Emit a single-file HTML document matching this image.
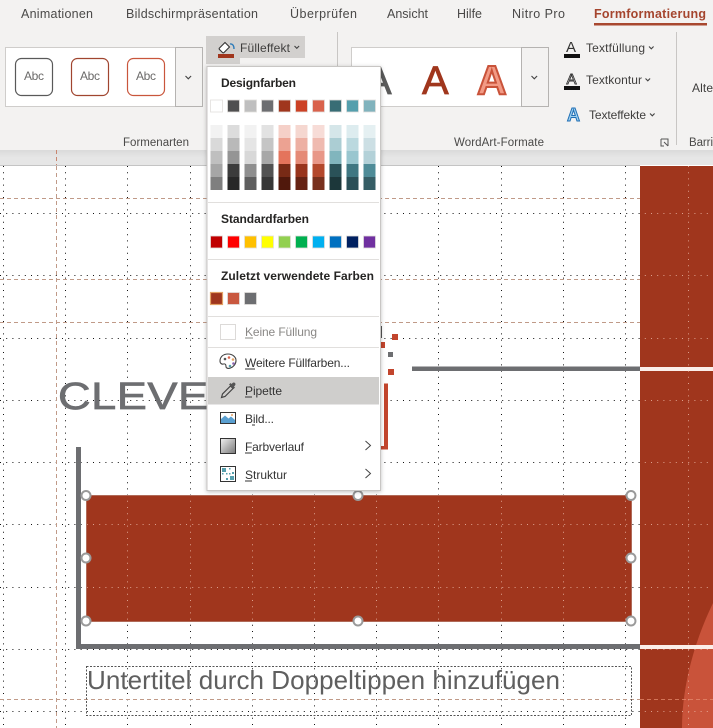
<!DOCTYPE html>
<html lang="de">
<head>
<meta charset="utf-8">
<title>Formformatierung</title>
<style>
html,body{margin:0;padding:0;background:#fff;width:713px;height:728px;overflow:hidden}
svg{display:block;position:absolute;left:0;top:0;overflow:hidden}
text{font-family:"Liberation Sans",sans-serif;fill:#444}
.tab{font-size:12.5px;fill:#4a4948}
.grp{font-size:11.5px;fill:#4a4948}
.cmd{font-size:12px;fill:#3f3e3d}
.hd{font-size:12px;font-weight:bold;fill:#252423}
.mi{font-size:12px;fill:#333}
.abc{font-size:12px;fill:#6b6a69}
.chev{fill:none;stroke:#444;stroke-width:1.1}
.sep{stroke:#e1dfdd;stroke-width:1}
.ul{stroke:#333;stroke-width:1}
.h{fill:#fff;stroke:#9a9a9a;stroke-width:2}
</style>
</head>
<body>
<svg width="713" height="728" viewBox="0 0 713 728" xmlns="http://www.w3.org/2000/svg">
<defs>
<linearGradient id="shadow" x1="0" y1="0" x2="0" y2="1"><stop offset="0" stop-color="#dadada"/><stop offset=".5" stop-color="#e6e6e6"/><stop offset="1" stop-color="#e6e6e6"/></linearGradient>
<linearGradient id="grad" x1="0" y1="0" x2="1" y2="1"><stop offset="0" stop-color="#f2f2f2"/><stop offset="1" stop-color="#777"/></linearGradient>
<clipPath id="red"><rect x="87" y="496" width="544" height="125"/><rect x="640" y="166" width="73" height="562"/></clipPath>
<filter id="ms" x="-10%" y="-10%" width="120%" height="120%"><feDropShadow dx="0" dy="1" stdDeviation="2" flood-color="#000" flood-opacity=".25"/></filter>
<g id="vg">
<path d="M3.500 166V728M65.500 166V728M127.500 166V728M190.500 166V728M252.500 166V728M314.500 166V728M376.500 166V728M438.500 166V728M501.500 166V728M563.500 166V728M625.500 166V728M688.500 166V728" fill="none" stroke-width="1" stroke-dasharray="1 5.200"/>
<path d="M0 213.500H713M0 275.500H713M0 338.500H713M0 400.500H713M0 462.500H713M0 524.500H713M0 587.500H713M0 649.500H713M0 711.500H713" fill="none" stroke-width="1" stroke-dasharray="1 5.200"/>
</g>
</defs>

<!-- canvas -->
<rect x="0" y="166" width="713" height="562" fill="#fff"/>
<use href="#vg" stroke="#111"/>
<path d="M0 198.500H713M0 279.500H713M0 322.500H713M0 699.500H713M56.500 166V728" fill="none" stroke="#c09a88" stroke-width="1" stroke-dasharray="4 3"/>

<!-- slide shapes -->
<rect x="640" y="166" width="73" height="562" fill="#a0361d"/>
<path d="M713 603C695 640 682 685 682 728H713Z" fill="#c9533a"/>
<rect x="412" y="366.500" width="228" height="4.500" fill="#6d6e71"/>
<rect x="640" y="367" width="73" height="4" fill="#fbeee9"/>
<rect x="76" y="447" width="5" height="202" fill="#6d6e71"/>
<rect x="76" y="644" width="564" height="5" fill="#6d6e71"/>
<rect x="640" y="645" width="73" height="4" fill="#fbeee9"/>
<text transform="translate(58 409) scale(1.19 1)" style="font-size:38px;letter-spacing:.4px;fill:#6d6e71;stroke:#6d6e71;stroke-width:.7">CLEVE</text>
<rect x="380" y="326" width="2" height="12" fill="#555"/>
<rect x="380" y="342" width="5" height="6" fill="#c2452d"/>
<rect x="392" y="334" width="6" height="6" fill="#c2452d"/>
<rect x="388" y="352" width="5" height="5" fill="#6d6e71"/>
<rect x="388" y="369" width="6" height="6" fill="#c2452d"/>
<rect x="384" y="383.500" width="4" height="66" fill="#c2452d"/>
<rect x="380" y="446" width="8" height="3.500" fill="#c2452d"/>
<rect x="86.500" y="495.500" width="545" height="126" rx="3" fill="#a0361d" stroke="#b06a58" stroke-width="1"/>
<g clip-path="url(#red)" opacity=".75"><use href="#vg" stroke="#f0c4b4"/>
<path d="M640 699.500H713" stroke="#e58a6e" stroke-dasharray="4 3"/></g>
<circle class="h" cx="86" cy="495.500" r="4.500"/><circle class="h" cx="358" cy="495.500" r="4.500"/><circle class="h" cx="631" cy="495.500" r="4.500"/>
<circle class="h" cx="86" cy="558" r="4.500"/><circle class="h" cx="631" cy="558" r="4.500"/>
<circle class="h" cx="86" cy="621" r="4.500"/><circle class="h" cx="358" cy="621" r="4.500"/><circle class="h" cx="631" cy="621" r="4.500"/>
<rect x="86.500" y="666.500" width="545" height="49" fill="none" stroke="#555" stroke-width="1" stroke-dasharray="2 1.500"/>
<text x="87" y="689" textLength="473" style="font-size:26px;fill:#5f5f5f">Untertitel durch Doppeltippen hinzufügen</text>

<!-- ribbon -->
<rect x="0" y="0" width="713" height="150" fill="#f3f2f1"/>
<rect x="0" y="150" width="713" height="15" fill="url(#shadow)"/>
<rect x="0" y="165" width="640" height="1" fill="#c4c4c4"/>
<path d="M56.500 150V165" stroke="#c9866f" stroke-dasharray="4 3"/>

<text class="tab" x="21" y="18" textLength="72">Animationen</text>
<text class="tab" x="126" y="18" textLength="132">Bildschirmpräsentation</text>
<text class="tab" x="290" y="18" textLength="67">Überprüfen</text>
<text class="tab" x="387" y="18" textLength="41">Ansicht</text>
<text class="tab" x="457" y="18" textLength="25">Hilfe</text>
<text class="tab" x="512" y="18" textLength="53">Nitro Pro</text>
<text class="tab" x="594" y="18" textLength="112" style="fill:#a5452e;font-weight:bold">Formformatierung</text>
<rect x="594" y="23" width="113" height="2.500" fill="#a8482f"/>

<!-- Shape style gallery -->
<rect x="5.500" y="47.500" width="170" height="59" fill="#fff" stroke="#cfcdcb"/>
<rect x="175.500" y="47.500" width="27" height="59" fill="#f3f2f1" stroke="#b5b3b1"/>
<path class="chev" d="M185.500 76l2.800 2.800 2.800-2.800"/>
<rect x="15.500" y="58.500" width="37" height="37" rx="6" fill="#fff" stroke="#595959" stroke-width="1.200"/>
<rect x="71.500" y="58.500" width="37" height="37" rx="6" fill="#fff" stroke="#a0452f" stroke-width="1.200"/>
<rect x="127.500" y="58.500" width="37" height="37" rx="6" fill="#fff" stroke="#c9563c" stroke-width="1.200"/>
<text class="abc" x="24" y="80" textLength="20">Abc</text>
<text class="abc" x="80" y="80" textLength="20">Abc</text>
<text class="abc" x="136" y="80" textLength="20">Abc</text>
<text class="grp" x="123" y="146" textLength="66">Formenarten</text>

<!-- Fill button -->
<rect x="206" y="36" width="99" height="22" fill="#d2d0ce"/>
<rect x="206" y="58" width="34" height="6" fill="#d2d0ce"/>
<path d="M225 42.500l-5.500 5.500c-.5.500-.5 1 0 1.500l3 3c.5.500 1 .5 1.500 0l5.500-5.500z" fill="#fff" stroke="#333" stroke-width="1.100"/>
<path d="M230 44c2.500-.5 4 1.500 4 5" fill="none" stroke="#2a7ab8" stroke-width="1.400"/>
<rect x="218" y="54" width="16" height="4" fill="#a0361d"/>
<text class="cmd" x="240" y="52" textLength="50">Fülleffekt</text>
<path class="chev" d="M294.500 46l2.300 2.300 2.300-2.300"/>

<line x1="337.500" y1="32" x2="337.500" y2="145" stroke="#c8c6c4"/>

<!-- WordArt gallery -->
<rect x="351.500" y="47.500" width="170" height="59" fill="#fff" stroke="#cfcdcb"/>
<rect x="521.500" y="47.500" width="27" height="59" fill="#f3f2f1" stroke="#b5b3b1"/>
<path class="chev" d="M531.500 76l2.800 2.800 2.800-2.800"/>
<text x="365" y="94" style="font-size:40px;fill:#5a5a5a;stroke:#5a5a5a;stroke-width:.7">A</text>
<text x="422" y="94" style="font-size:40px;fill:#a0361d;stroke:#a0361d;stroke-width:.8">A</text>
<text x="477" y="94" style="font-size:41px;font-weight:bold;fill:#f29a85;stroke:#c9533a;stroke-width:2">A</text>
<text class="grp" x="454" y="146" textLength="90">WordArt-Formate</text>

<!-- Text commands -->
<text x="566" y="52" style="font-size:15px;fill:#333">A</text>
<rect x="564" y="54" width="16" height="4" fill="#111"/>
<text class="cmd" x="586" y="52" textLength="59">Textfüllung</text>
<path class="chev" d="M649 46.500l2.300 2.300 2.300-2.300"/>
<text x="566.500" y="84" style="font-size:15px;fill:#fff;stroke:#333;stroke-width:.9">A</text>
<rect x="564" y="86" width="16" height="4" fill="#111"/>
<text class="cmd" x="586" y="84" textLength="56">Textkontur</text>
<path class="chev" d="M645.500 78.500l2.300 2.300 2.300-2.300"/>
<text x="567" y="121" style="font-size:18px;font-weight:bold;fill:#9fd0f0;stroke:#1f6fb5;stroke-width:1">A</text>
<text class="cmd" x="589" y="119" textLength="57">Texteffekte</text>
<path class="chev" d="M650 113.500l2.300 2.300 2.300-2.300"/>
<path d="M661 139h7v7M664 142l4 4M661 139v7h3" fill="none" stroke="#555" stroke-width="1"/>
<line x1="676.500" y1="32" x2="676.500" y2="145" stroke="#c8c6c4"/>
<text class="cmd" x="692" y="92" textLength="21">Alte</text>
<text class="grp" x="689" y="146" textLength="24">Barri</text>

<!-- Dropdown menu -->
<rect x="207" y="66.500" width="173.500" height="424" fill="#fff" stroke="#c8c6c4" filter="url(#ms)"/>
<text class="hd" x="221" y="87" textLength="75">Designfarben</text>
<g stroke="#e1dfdd" stroke-width=".8">
<rect x="210.500" y="100" width="12" height="12" fill="#fff"/>
<rect x="227.500" y="100" width="12" height="12" fill="#4f4f50"/>
<rect x="244.500" y="100" width="12" height="12" fill="#bfbfbf"/>
<rect x="261.500" y="100" width="12" height="12" fill="#6d6e71"/>
<rect x="278.500" y="100" width="12" height="12" fill="#a0361d"/>
<rect x="295.500" y="100" width="12" height="12" fill="#cc4125"/>
<rect x="312.500" y="100" width="12" height="12" fill="#d9624c"/>
<rect x="329.500" y="100" width="12" height="12" fill="#386d75"/>
<rect x="346.500" y="100" width="12" height="12" fill="#559fad"/>
<rect x="363.500" y="100" width="12" height="12" fill="#81b3bd"/>
</g>
<g>
<g transform="translate(210.500 125)"><rect width="12" height="13" fill="#f2f2f2"/><rect y="13" width="12" height="13" fill="#d9d9d9"/><rect y="26" width="12" height="13" fill="#bfbfbf"/><rect y="39" width="12" height="13" fill="#a6a6a6"/><rect y="52" width="12" height="13" fill="#7f7f7f"/></g>
<g transform="translate(227.500 125)"><rect width="12" height="13" fill="#dcdcdc"/><rect y="13" width="12" height="13" fill="#b9b9b9"/><rect y="26" width="12" height="13" fill="#959595"/><rect y="39" width="12" height="13" fill="#3c3c3c"/><rect y="52" width="12" height="13" fill="#282828"/></g>
<g transform="translate(244.500 125)"><rect width="12" height="13" fill="#f2f2f2"/><rect y="13" width="12" height="13" fill="#e5e5e5"/><rect y="26" width="12" height="13" fill="#d8d8d8"/><rect y="39" width="12" height="13" fill="#8f8f8f"/><rect y="52" width="12" height="13" fill="#5f5f5f"/></g>
<g transform="translate(261.500 125)"><rect width="12" height="13" fill="#e2e2e2"/><rect y="13" width="12" height="13" fill="#c5c5c5"/><rect y="26" width="12" height="13" fill="#a8a8a8"/><rect y="39" width="12" height="13" fill="#525252"/><rect y="52" width="12" height="13" fill="#373737"/></g>
<g transform="translate(278.500 125)"><rect width="12" height="13" fill="#f5d0c8"/><rect y="13" width="12" height="13" fill="#eca292"/><rect y="26" width="12" height="13" fill="#e4745c"/><rect y="39" width="12" height="13" fill="#782a16"/><rect y="52" width="12" height="13" fill="#50180c"/></g>
<g transform="translate(295.500 125)"><rect width="12" height="13" fill="#f5d7d0"/><rect y="13" width="12" height="13" fill="#edb0a3"/><rect y="26" width="12" height="13" fill="#e58a76"/><rect y="39" width="12" height="13" fill="#99341c"/><rect y="52" width="12" height="13" fill="#662213"/></g>
<g transform="translate(312.500 125)"><rect width="12" height="13" fill="#f7dcd7"/><rect y="13" width="12" height="13" fill="#efbab0"/><rect y="26" width="12" height="13" fill="#e89788"/><rect y="39" width="12" height="13" fill="#b4482c"/><rect y="52" width="12" height="13" fill="#78301d"/></g>
<g transform="translate(329.500 125)"><rect width="12" height="13" fill="#d5e6e9"/><rect y="13" width="12" height="13" fill="#abcdd3"/><rect y="26" width="12" height="13" fill="#81b5bd"/><rect y="39" width="12" height="13" fill="#2a5258"/><rect y="52" width="12" height="13" fill="#1c373a"/></g>
<g transform="translate(346.500 125)"><rect width="12" height="13" fill="#ddecef"/><rect y="13" width="12" height="13" fill="#bbd9df"/><rect y="26" width="12" height="13" fill="#99c6cf"/><rect y="39" width="12" height="13" fill="#3f7782"/><rect y="52" width="12" height="13" fill="#2a4f57"/></g>
<g transform="translate(363.500 125)"><rect width="12" height="13" fill="#e5f0f2"/><rect y="13" width="12" height="13" fill="#ccdfe4"/><rect y="26" width="12" height="13" fill="#b3d1d8"/><rect y="39" width="12" height="13" fill="#4f8c98"/><rect y="52" width="12" height="13" fill="#365e66"/></g>
</g>
<line class="sep" x1="208" y1="202.500" x2="379" y2="202.500"/>
<text class="hd" x="221" y="223" textLength="88">Standardfarben</text>
<g stroke="#e1dfdd" stroke-width=".8">
<rect x="210.500" y="236" width="12" height="12" fill="#c00000"/>
<rect x="227.500" y="236" width="12" height="12" fill="#ff0000"/>
<rect x="244.500" y="236" width="12" height="12" fill="#ffc000"/>
<rect x="261.500" y="236" width="12" height="12" fill="#ffff00"/>
<rect x="278.500" y="236" width="12" height="12" fill="#92d050"/>
<rect x="295.500" y="236" width="12" height="12" fill="#00b050"/>
<rect x="312.500" y="236" width="12" height="12" fill="#00b0f0"/>
<rect x="329.500" y="236" width="12" height="12" fill="#0070c0"/>
<rect x="346.500" y="236" width="12" height="12" fill="#002060"/>
<rect x="363.500" y="236" width="12" height="12" fill="#7030a0"/>
</g>
<line class="sep" x1="208" y1="259.500" x2="379" y2="259.500"/>
<text class="hd" x="221" y="280" textLength="153">Zuletzt verwendete Farben</text>
<rect x="210.500" y="292.500" width="12" height="12" fill="#a0361d" stroke="#e3a164" stroke-width="1.200"/>
<rect x="227.500" y="292.500" width="12" height="12" fill="#c9583f" stroke="#e1dfdd" stroke-width=".8"/>
<rect x="244.500" y="292.500" width="12" height="12" fill="#6d6e71" stroke="#e1dfdd" stroke-width=".8"/>
<line class="sep" x1="208" y1="316.500" x2="379" y2="316.500"/>
<rect x="220.500" y="324.500" width="15" height="15" fill="#fff" stroke="#dcdad8"/>
<text class="mi" x="245" y="336" textLength="72" style="fill:#8a8886">Keine Füllung</text>
<line x1="245" y1="338" x2="253" y2="338" stroke="#8a8886"/>
<line class="sep" x1="208" y1="347.500" x2="379" y2="347.500"/>

<path d="M228 354c-5 0-8 3-8 7 0 2.500 2 3.500 3.500 3 2-.6 2.500 1 2.500 2.500 0 1.500 2 2.500 4.500 1.500 3-1.200 5.500-4 5.500-7.500 0-3.500-3.500-6.500-8-6.500z" fill="#fff" stroke="#444" stroke-width="1.100"/>
<circle cx="225" cy="359" r="1.300" fill="#555"/><circle cx="229" cy="357.500" r="1.300" fill="#d9624c"/><circle cx="233" cy="359.500" r="1.300" fill="#e3a164"/><circle cx="233.500" cy="363.500" r="1.300" fill="#8a64b0"/><circle cx="230" cy="366" r="1.300" fill="#559fad"/>
<text class="mi" x="245" y="367" textLength="105">Weitere Füllfarben...</text>
<line class="ul" x1="245" y1="369" x2="255" y2="369"/>

<rect x="208" y="377" width="171" height="27.500" fill="#cfcecc"/>
<path d="M221.500 397.500l1-3.500 8-8 2.500 2.500-8 8z" fill="#cfcecc" stroke="#444" stroke-width="1.200"/>
<path d="M229 384.500l4.500 4.500 1.500-1.500-1-1 .8-.8c.9-.9.9-2 .2-2.700s-1.800-.7-2.700.2l-.8.8-1-1z" fill="#555"/>
<text class="mi" x="245" y="395" textLength="37">Pipette</text>
<line class="ul" x1="245" y1="397" x2="252" y2="397"/>

<rect x="220.500" y="412.500" width="15" height="11" fill="#fff" stroke="#333"/>
<path d="M221 423v-4l4-3.500 3.500 3 2.500-2 4 3.500V423z" fill="#5a9fd0"/>
<circle cx="232" cy="415" r="1" fill="#e3a164"/>
<text class="mi" x="245" y="423" textLength="29">Bild...</text>
<line class="ul" x1="252" y1="425" x2="255" y2="425"/>

<rect x="220.500" y="438.500" width="15" height="15" fill="url(#grad)" stroke="#333"/>
<text class="mi" x="245" y="451" textLength="59">Farbverlauf</text>
<line class="ul" x1="245" y1="453" x2="252" y2="453"/>
<path d="M365.500 441l5 4.500-5 4.500" fill="none" stroke="#444" stroke-width="1"/>

<rect x="220.500" y="466.500" width="15" height="15" fill="#fff" stroke="#333"/>
<path d="M222 468h4v4h-4zM230 476h4v4h-4zM226 478h2v2h-2zM232 472h2v2h-2zM222 473h1.500v1.500H222zM229 468h1.500v1.500H229zM226 473h1.500v1.500H226zM229 473h1.500v1.500H229z" fill="#559fad"/>
<text class="mi" x="245" y="479" textLength="42">Struktur</text>
<line class="ul" x1="245" y1="481" x2="252" y2="481"/>
<path d="M365.500 469l5 4.500-5 4.500" fill="none" stroke="#444" stroke-width="1"/>
</svg>
</body>
</html>
